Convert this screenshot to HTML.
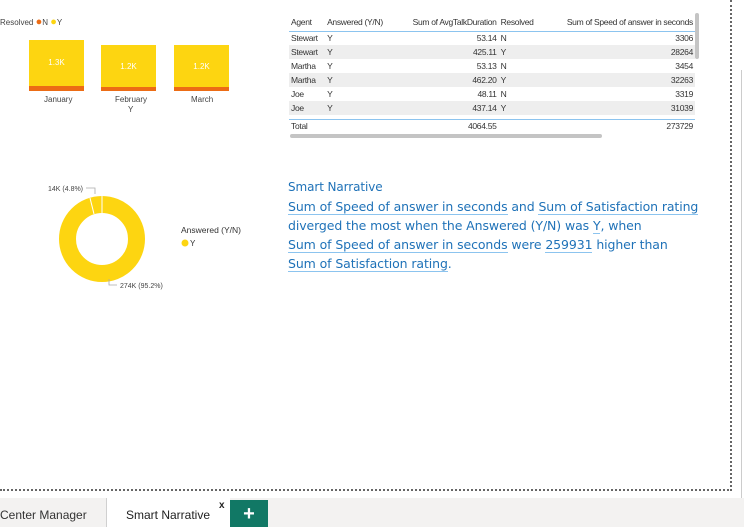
<!DOCTYPE html>
<html><head><style>
*{margin:0;padding:0;box-sizing:border-box}
body{width:744px;height:527px;background:#fff;position:relative;overflow:hidden;font-family:"Liberation Sans",sans-serif;color:#333}
.a{position:absolute;white-space:nowrap}
.s{font-size:8px;color:#444}
.bar{position:absolute;background:#fdd511}
.bar .o{position:absolute;left:0;right:0;bottom:0;height:5px;background:#ec6c15}
.bar span{position:absolute;left:0;right:0;text-align:center;color:#fff;font-size:8px}
table{border-collapse:collapse;font-size:8.5px;letter-spacing:-0.3px}
td{height:14px;padding:0 2px;color:#333}
.n{font-family:"Comic Sans MS","DejaVu Sans",sans-serif;color:#1f72b8;font-size:12.5px;letter-spacing:-0.1px}
.u{border-bottom:1px solid #8cc4ef}
</style></head><body>
<div class="a s" style="left:0;top:16px">Resolved <span style="color:#ec6c15;font-size:11px">●</span>N <span style="color:#fdd511;font-size:11px">●</span>Y</div>
<div class="bar" style="left:29px;top:40px;width:55px;height:51px"><span style="top:18px">1.3K</span><div class="o"></div></div>
<div class="bar" style="left:101px;top:45px;width:55px;height:46px"><span style="top:17px">1.2K</span><div class="o" style="height:4px"></div></div>
<div class="bar" style="left:174px;top:45px;width:55px;height:46px"><span style="top:17px">1.2K</span><div class="o" style="height:4px"></div></div>
<div class="a s" style="left:44px;top:95px">January</div>
<div class="a s" style="left:115px;top:95px">February</div>
<div class="a s" style="left:128px;top:105px">Y</div>
<div class="a s" style="left:191px;top:95px">March</div>

<svg class="a" style="left:0;top:170px" width="280" height="130">
<circle cx="102" cy="69" r="34.5" fill="none" stroke="#fdd511" stroke-width="17"/>
<line x1="102" y1="26" x2="102" y2="43" stroke="#fff" stroke-width="1"/>
<line x1="90" y1="28" x2="94" y2="44" stroke="#fff" stroke-width="1"/>
<polyline points="86,18 95,18 95,24" fill="none" stroke="#aaa" stroke-width="0.8"/>
<polyline points="109,109 109,115 117,115" fill="none" stroke="#aaa" stroke-width="0.8"/>
<text x="48" y="21" font-size="7" fill="#444" font-family="Liberation Sans">14K (4.8%)</text>
<text x="120" y="118" font-size="7" fill="#444" font-family="Liberation Sans">274K (95.2%)</text>
<text x="181" y="63" font-size="8.5" fill="#333" font-family="Liberation Sans">Answered (Y/N)</text>
<circle cx="185" cy="73" r="3.5" fill="#fdd511"/>
<text x="190" y="76" font-size="8" fill="#333" font-family="Liberation Sans">Y</text>
</svg>

<div class="a" style="left:289px;top:13px">
<table style="width:406px">
<tr style="height:18px;border-bottom:1.5px solid #8cc4ef"><td>Agent</td><td>Answered (Y/N)</td><td style="text-align:right">Sum of AvgTalkDuration</td><td>Resolved</td><td style="text-align:right">Sum of Speed of answer in seconds</td></tr>
<tr><td>Stewart</td><td>Y</td><td style="text-align:right">53.14</td><td>N</td><td style="text-align:right">3306</td></tr>
<tr style="background:#eee"><td>Stewart</td><td>Y</td><td style="text-align:right">425.11</td><td>Y</td><td style="text-align:right">28264</td></tr>
<tr><td>Martha</td><td>Y</td><td style="text-align:right">53.13</td><td>N</td><td style="text-align:right">3454</td></tr>
<tr style="background:#eee"><td>Martha</td><td>Y</td><td style="text-align:right">462.20</td><td>Y</td><td style="text-align:right">32263</td></tr>
<tr><td>Joe</td><td>Y</td><td style="text-align:right">48.11</td><td>N</td><td style="text-align:right">3319</td></tr>
<tr style="background:#eee"><td>Joe</td><td>Y</td><td style="text-align:right">437.14</td><td>Y</td><td style="text-align:right">31039</td></tr>
<tr style="border-bottom:1.5px solid #8cc4ef"><td colspan="5" style="height:4px"></td></tr>
<tr><td>Total</td><td></td><td style="text-align:right">4064.55</td><td></td><td style="text-align:right">273729</td></tr>
</table></div>
<div class="a" style="left:695px;top:13px;width:4px;height:46px;background:#c4c4c4;border-radius:2px"></div>
<div class="a" style="left:290px;top:134px;width:312px;height:4px;background:#c4c4c4;border-radius:2px"></div>

<div class="a n" style="left:288px;top:178px;line-height:19px">
<div style="font-size:12px">Smart Narrative</div>
<div><span class="u">Sum of Speed of answer in seconds</span> and <span class="u">Sum of Satisfaction rating</span></div>
<div>diverged the most when the Answered (Y/N) was <span class="u">Y</span>, when</div>
<div><span class="u">Sum of Speed of answer in seconds</span> were <span class="u">259931</span> higher than</div>
<div><span class="u">Sum of Satisfaction rating</span>.</div>
</div>

<div class="a" style="left:730px;top:0;height:491px;border-left:2px dotted #666"></div>
<div class="a" style="left:0;top:489px;width:732px;border-top:2px dotted #666"></div>
<div class="a" style="left:741px;top:70px;width:3px;height:430px;border-left:1px solid #ccc"></div>

<div class="a" style="left:0;top:498px;width:744px;height:29px;background:#f3f2f1"></div>
<div class="a" style="left:0;top:508px;font-size:12px;color:#333">Center Manager</div>
<div class="a" style="left:106px;top:498px;width:1px;height:29px;background:#d0d0d0"></div>
<div class="a" style="left:107px;top:498px;width:123px;height:29px;background:#fff"></div>
<div class="a" style="left:126px;top:508px;font-size:12px;color:#222">Smart Narrative</div>
<div class="a" style="left:219px;top:500px;font-size:10px;color:#222;font-weight:bold">x</div>
<div class="a" style="left:230px;top:500px;width:38px;height:27px;background:#117865;color:#fff;font-size:20px;font-weight:bold;text-align:center;line-height:29px">+</div>
</body></html>
